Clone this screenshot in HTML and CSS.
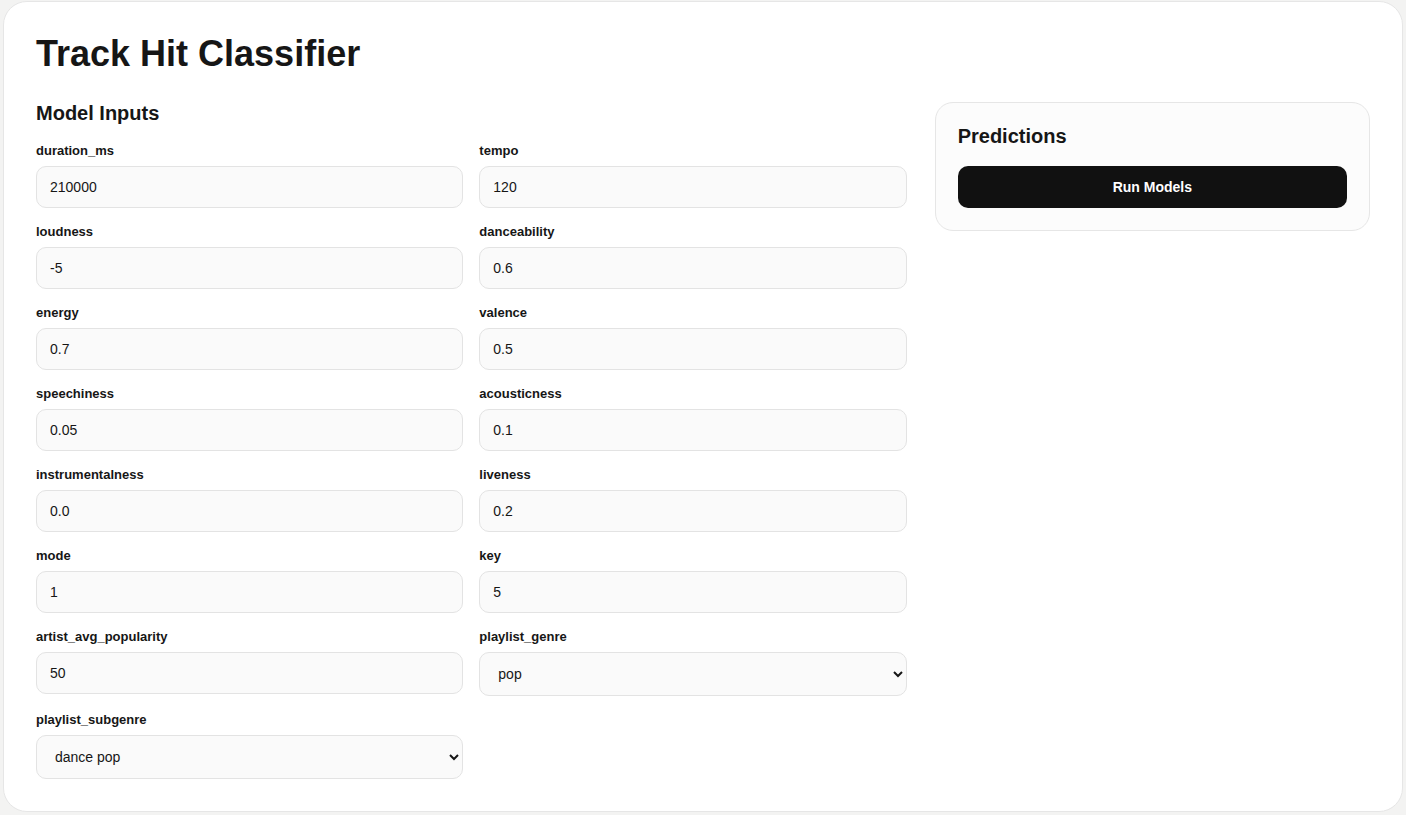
FILE: index.html
```html
<!DOCTYPE html>
<html lang="en">
<head>
<meta charset="utf-8">
<title>Track Hit Classifier</title>
<link rel="stylesheet" href="styles.css">
</head>
<body>
<main class="card">
  <h1 class="title">Track Hit Classifier</h1>
  <div class="layout">
    <section class="inputs">
      <h2 class="section-title">Model Inputs</h2>
      <div class="form-grid">
        <label class="field"><span class="field-label">duration_ms</span><input class="control" type="text" value="210000"></label>
        <label class="field"><span class="field-label">tempo</span><input class="control" type="text" value="120"></label>
        <label class="field"><span class="field-label">loudness</span><input class="control" type="text" value="-5"></label>
        <label class="field"><span class="field-label">danceability</span><input class="control" type="text" value="0.6"></label>
        <label class="field"><span class="field-label">energy</span><input class="control" type="text" value="0.7"></label>
        <label class="field"><span class="field-label">valence</span><input class="control" type="text" value="0.5"></label>
        <label class="field"><span class="field-label">speechiness</span><input class="control" type="text" value="0.05"></label>
        <label class="field"><span class="field-label">acousticness</span><input class="control" type="text" value="0.1"></label>
        <label class="field"><span class="field-label">instrumentalness</span><input class="control" type="text" value="0.0"></label>
        <label class="field"><span class="field-label">liveness</span><input class="control" type="text" value="0.2"></label>
        <label class="field"><span class="field-label">mode</span><input class="control" type="text" value="1"></label>
        <label class="field"><span class="field-label">key</span><input class="control" type="text" value="5"></label>
        <label class="field"><span class="field-label">artist_avg_popularity</span><input class="control" type="text" value="50"></label>
        <label class="field"><span class="field-label">playlist_genre</span>
          <select class="control select">
            <option selected>pop</option>
            <option>rock</option>
            <option>rap</option>
            <option>latin</option>
            <option>r&amp;b</option>
            <option>edm</option>
          </select>
        </label>
        <label class="field"><span class="field-label">playlist_subgenre</span>
          <select class="control select">
            <option selected>dance pop</option>
            <option>post-teen pop</option>
            <option>electropop</option>
          </select>
        </label>
      </div>
    </section>
    <aside class="panel">
      <h2 class="section-title">Predictions</h2>
      <button class="run-btn" type="button">Run Models</button>
    </aside>
  </div>
</main>
</body>
</html>
```

FILE: styles.css
```css
html, body {
  background: #f3f3f2;
}
body {
  margin: 1px 3px 3px;
  font-family: "Liberation Sans", Arial, Helvetica, sans-serif;
  color: #111;
}
.card {
  background: #fff;
  border: 1px solid #e6e6e6;
  border-radius: 24px;
  padding: 32px;
}
.title {
  margin: 0 0 28px;
  font-size: 36px;
  line-height: 40px;
  font-weight: 700;
  color: #161616;
}
.layout {
  display: grid;
  grid-template-columns: 2fr 1fr;
  gap: 28px;
  align-items: start;
}
.section-title {
  margin: 0 0 18px;
  font-size: 20px;
  line-height: 23px;
  font-weight: 700;
  color: #161616;
}
.form-grid {
  display: grid;
  grid-template-columns: 1fr 1fr;
  column-gap: 16px;
  row-gap: 16px;
}
.field {
  display: flex;
  flex-direction: column;
  gap: 8px;
}
.field-label {
  font-size: 13px;
  line-height: 15px;
  font-weight: 700;
  color: #161616;
}
.control {
  box-sizing: border-box;
  width: 100%;
  height: 42px;
  margin: 0;
  padding: 0 12px 0 13px;
  border: 1px solid #e3e3e3;
  border-radius: 10px;
  background: #fafafa;
  font-family: "Liberation Sans", Arial, Helvetica, sans-serif;
  font-size: 14px;
  color: #161616;
  outline: none;
}
.select {
  height: 44px;
  padding-left: 14px;
  padding-right: 0;
}
.panel {
  background: #fcfcfc;
  border: 1px solid #e6e6e6;
  border-radius: 18px;
  padding: 22px;
}
.run-btn {
  display: block;
  width: 100%;
  height: 42px;
  border: 0;
  border-radius: 10px;
  background: #111;
  color: #fff;
  font-family: "Liberation Sans", Arial, Helvetica, sans-serif;
  font-size: 14px;
  font-weight: 700;
  cursor: pointer;
}
```
